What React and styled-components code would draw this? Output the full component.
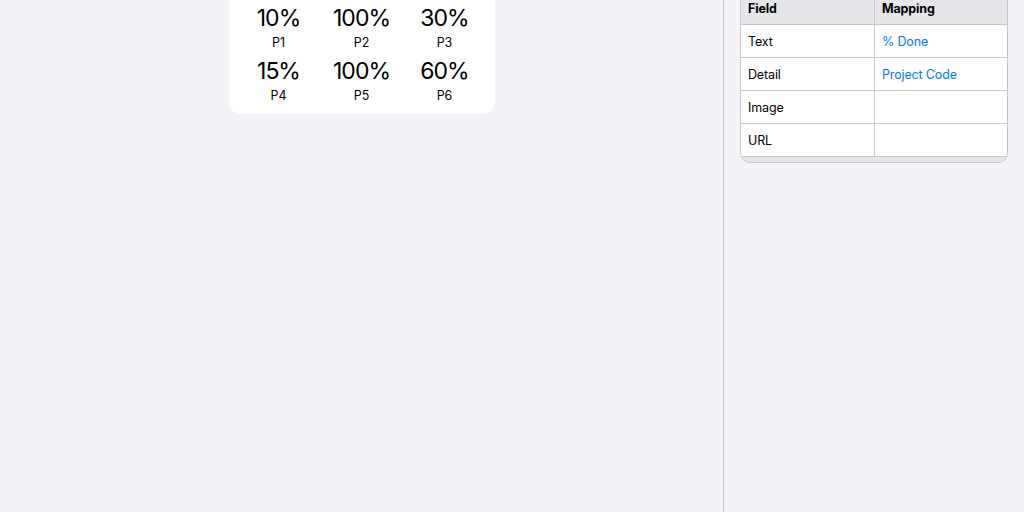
import React from 'react';
import styled, { createGlobalStyle } from 'styled-components';

const GlobalStyle = createGlobalStyle`
  html, body {
    margin: 0;
    padding: 0;
    background: #f2f2f7;
    font-family: Inter, "Noto Sans", sans-serif;
    color: #000;
  }
`;

const Page = styled.div`
  display: flex;
  width: 1024px;
  height: 512px;
  overflow: hidden;
  background: #f2f2f7;
`;

const Canvas = styled.div`
  width: 723px;
  border-right: 1px solid #c6c6c8;
  display: flex;
  flex-direction: column;
  align-items: center;
`;

const Card = styled.div`
  margin-top: -12px;
  width: 266px;
  box-sizing: border-box;
  padding: 16px 0 9px;
  background: #fff;
  border-radius: 12px;
  display: grid;
  grid-template-columns: repeat(3, 83px);
  justify-content: center;
  row-gap: 5px;
`;

const Stat = styled.div`
  display: flex;
  flex-direction: column;
  align-items: center;
`;

const Value = styled.div`
  font-size: 23px;
  line-height: 28px;
  letter-spacing: -1px;
`;

const Label = styled.div`
  font-size: 12.5px;
  line-height: 18px;
  margin-top: 2px;
`;

const Inspector = styled.div`
  flex: 1;
  padding: 0 16px;
`;

const Table = styled.div`
  margin-top: -9px;
  border: 1px solid #c6c6c8;
  border-radius: 10px;
  overflow: hidden;
  background: #e5e5ea;
  padding-bottom: 5px;
`;

const Row = styled.div`
  display: grid;
  grid-template-columns: 133px 1fr;
  height: 33px;
  box-sizing: border-box;
  border-bottom: 1px solid #c6c6c8;
  background: ${({ $header }) => ($header ? '#e5e5ea' : '#fff')};
`;

const Cell = styled.div`
  display: flex;
  align-items: center;
  padding-left: 7px;
  font-size: 12.5px;
  letter-spacing: -0.15px;
  font-weight: ${({ $bold }) => ($bold ? 700 : 400)};
  color: ${({ $link }) => ($link ? '#007aff' : '#000')};
  & + & {
    border-left: 1px solid #c6c6c8;
  }
`;

const stats = [
  ['10%', 'P1'],
  ['100%', 'P2'],
  ['30%', 'P3'],
  ['15%', 'P4'],
  ['100%', 'P5'],
  ['60%', 'P6'],
];

const mappings = [
  ['Text', '% Done'],
  ['Detail', 'Project Code'],
  ['Image', ''],
  ['URL', ''],
];

export default function App() {
  return (
    <>
      <GlobalStyle />
      <Page>
        <Canvas>
          <Card>
            {stats.map(([v, l]) => (
              <Stat key={l}>
                <Value>{v}</Value>
                <Label>{l}</Label>
              </Stat>
            ))}
          </Card>
        </Canvas>
        <Inspector>
          <Table>
            <Row $header>
              <Cell $bold>Field</Cell>
              <Cell $bold>Mapping</Cell>
            </Row>
            {mappings.map(([f, m]) => (
              <Row key={f}>
                <Cell>{f}</Cell>
                <Cell $link>{m}</Cell>
              </Row>
            ))}
          </Table>
        </Inspector>
      </Page>
    </>
  );
}
